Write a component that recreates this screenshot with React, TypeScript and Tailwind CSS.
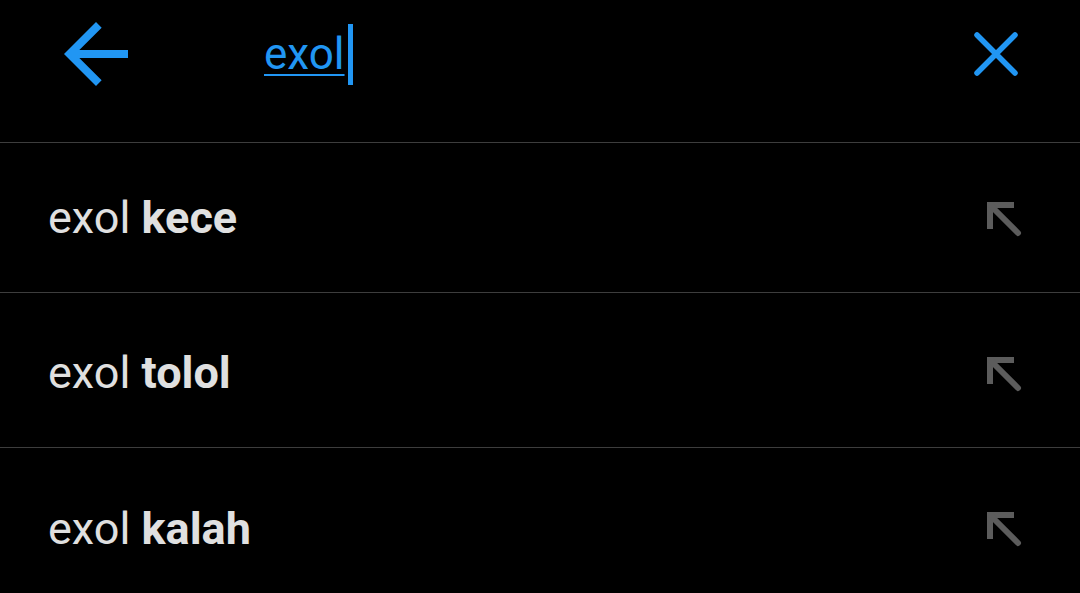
import React from 'react';

const suggestions = [
  { rest: 'kece', h: 'h-[149px]' },
  { rest: 'tolol', h: 'h-[149px] pt-[5px]' },
  { rest: 'kalah', h: 'h-[160px]' },
];

const BackArrow = () => (
  <svg width="96" height="96" viewBox="0 0 24 24" fill="#2196F3">
    <path d="M20 11H7.83l5.59-5.59L12 4l-8 8 8 8 1.41-1.41L7.83 13H20v-2z" />
  </svg>
);

const CloseIcon = () => (
  <svg width="52" height="52" viewBox="0 0 52 52" fill="none" stroke="#2196F3" strokeWidth="5.5" strokeLinecap="round">
    <path d="M7 7L45 45M45 7L7 45" />
  </svg>
);

const NorthWest = () => (
  <svg width="40" height="40" viewBox="0 0 40 40" fill="none" stroke="#5c5c5c" strokeWidth="6" strokeLinecap="round" strokeLinejoin="miter">
    <path d="M7 31V7H31" strokeLinecap="butt" />
    <path d="M8 8L35 35" />
  </svg>
);

export default function App() {
  return (
    <div className="w-[1080px] h-[593px] bg-black overflow-hidden" style={{ fontFamily: 'Roboto, "Noto Sans", sans-serif' }}>
      {/* search header */}
      <div className="h-[142px] border-b border-[#3d3d3d] box-content">
        <div className="h-[108px] flex items-center">
          <div className="ml-[48px] w-[96px] h-[96px] flex items-center justify-center">
            <BackArrow />
          </div>
          <div className="ml-[120px] flex items-center">
            <span className="text-[44px] leading-none text-[#2196F3] underline decoration-2 underline-offset-[5px]">exol</span>
            <span className="ml-[3px] w-[5px] h-[61px] bg-[#2196F3]" />
          </div>
          <div className="ml-auto mr-[58px] flex items-center">
            <CloseIcon />
          </div>
        </div>
      </div>

      {/* suggestion rows */}
      {suggestions.map((s, i) => (
        <div
          key={s.rest}
          className={`${s.h} box-content flex items-center justify-between pl-[48px] pr-[57px] ${i < 2 ? 'border-b border-[#3d3d3d]' : ''}`}
        >
          <span className="text-[45px] leading-none text-[#e0e0e0]">
            exol <span className="font-bold">{s.rest}</span>
          </span>
          <NorthWest />
        </div>
      ))}
    </div>
  );
}
